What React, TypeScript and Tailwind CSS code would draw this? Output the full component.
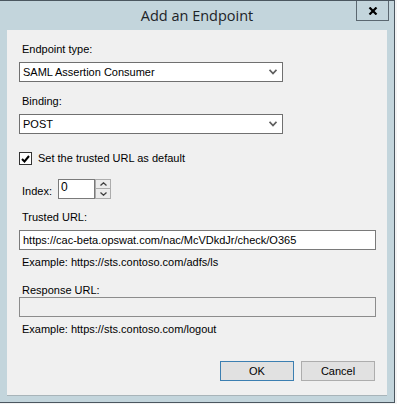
import { useState } from 'react'

function Chevron() {
  return (
    <svg width="8" height="6" viewBox="0 0 8 6" className="shrink-0">
      <path d="M0.5 0.8 L4 4.5 L7.5 0.8" fill="none" stroke="#5f5f5f" strokeWidth="1.8" />
    </svg>
  )
}

function Select({ value }: { value: string }) {
  return (
    <div className="w-[264px] h-[20px] border border-[#707070] bg-white flex items-center pl-[3px] pr-[5px]">
      <span className="flex-1 leading-[13px]">{value}</span>
      <Chevron />
    </div>
  )
}

function Label({ children, className = '' }: { children: React.ReactNode; className?: string }) {
  return <div className={`pl-[3px] h-[13px] leading-[13px] ${className}`}>{children}</div>
}

export default function App() {
  const [asDefault, setAsDefault] = useState(true)
  const [index] = useState('0')
  const [trustedUrl, setTrustedUrl] = useState('https://cac-beta.opswat.com/nac/McVDkdJr/check/O365')

  return (
    <div className="w-[397px] h-[404px] bg-[#f3f3f3] overflow-hidden">
      <div className="w-[395px] h-[403px] border-t border-r border-b border-[#4b5760] bg-[#c3d5dc] flex flex-col">
        <div className="relative h-[29px] shrink-0">
          <div className="text-center pt-[5px] text-[14.5px] leading-[20px] text-[#1d2328] font-['Open_Sans',sans-serif]">
            Add an Endpoint
          </div>
          <button className="absolute top-0 right-[5px] w-[33px] h-[20px] border-l border-r border-b border-[#5b6770] flex items-center justify-center">
            <svg width="10" height="8" viewBox="0 0 10 8">
              <path d="M1.5 0.5 L8.5 7.5 M8.5 0.5 L1.5 7.5" stroke="#000" strokeWidth="2.2" />
            </svg>
          </button>
        </div>

        <div className="ml-[7px] w-[380px] h-[366px] bg-[#f0f0f0] border-b border-[#a8b4b9] pl-[12px] pt-[13px] text-[11px] text-black font-['Liberation_Sans',Arial,sans-serif]">
          <Label>Endpoint type:</Label>
          <div className="mt-[6px]">
            <Select value="SAML Assertion Consumer" />
          </div>

          <Label className="mt-[13px]">Binding:</Label>
          <div className="mt-[6px]">
            <Select value="POST" />
          </div>

          <div className="mt-[18px] flex items-center h-[13px] cursor-default" onClick={() => setAsDefault(!asDefault)}>
            <div className="w-[13px] h-[13px] border border-[#333333] bg-white flex items-center justify-center">
              {asDefault && (
                <svg width="9" height="8" viewBox="0 0 9 8">
                  <path d="M1 4 L3.5 6.5 L8 1" fill="none" stroke="#000" strokeWidth="2" />
                </svg>
              )}
            </div>
            <span className="ml-[6px] leading-[13px]">Set the trusted URL as default</span>
          </div>

          <div className="mt-[14px] flex items-start pl-[3px] h-[20px]">
            <span className="w-[36px] mt-[6px] leading-[13px]">Index:</span>
            <div className="w-[37px] h-[20px] border border-[#7a7a7a] bg-white pl-[2px] pt-[1px] leading-[13px] text-[12px]">
              {index}
            </div>
            <div className="ml-[0px] w-[16px] h-[20px] flex flex-col">
              <div className="h-[10px] border border-[#acacac] bg-[#ececec] flex items-center justify-center">
                <svg width="7" height="4" viewBox="0 0 7 4">
                  <path d="M0.5 3.5 L3.5 0.8 L6.5 3.5" fill="none" stroke="#404040" strokeWidth="1.3" />
                </svg>
              </div>
              <div className="h-[10px] border border-t-0 border-[#acacac] bg-[#ececec] flex items-center justify-center">
                <svg width="7" height="4" viewBox="0 0 7 4">
                  <path d="M0.5 0.5 L3.5 3.2 L6.5 0.5" fill="none" stroke="#404040" strokeWidth="1.3" />
                </svg>
              </div>
            </div>
          </div>

          <Label className="mt-[12px]">Trusted URL:</Label>
          <input
            value={trustedUrl}
            onChange={(e) => setTrustedUrl(e.target.value)}
            className="mt-[6px] block w-[357px] h-[20px] border border-[#7a7a7a] bg-white px-[3px] leading-[13px] outline-none"
          />
          <Label className="mt-[6px]">Example: https://sts.contoso.com/adfs/ls</Label>

          <Label className="mt-[15px]">Response URL:</Label>
          <div className="block w-[357px] h-[20px] border border-[#8c8c8c] bg-[#f0f0f0]" />
          <Label className="mt-[6px]">Example: https://sts.contoso.com/logout</Label>

          <div className="mt-[25px] flex justify-end gap-[7px] pr-[12px]">
            <button className="w-[74px] h-[20px] border border-[#3c7fb1] bg-[#e1e1e1] leading-[13px]">OK</button>
            <button className="w-[74px] h-[20px] border border-[#adadad] bg-[#e1e1e1] leading-[13px]">Cancel</button>
          </div>
        </div>
      </div>
    </div>
  )
}
